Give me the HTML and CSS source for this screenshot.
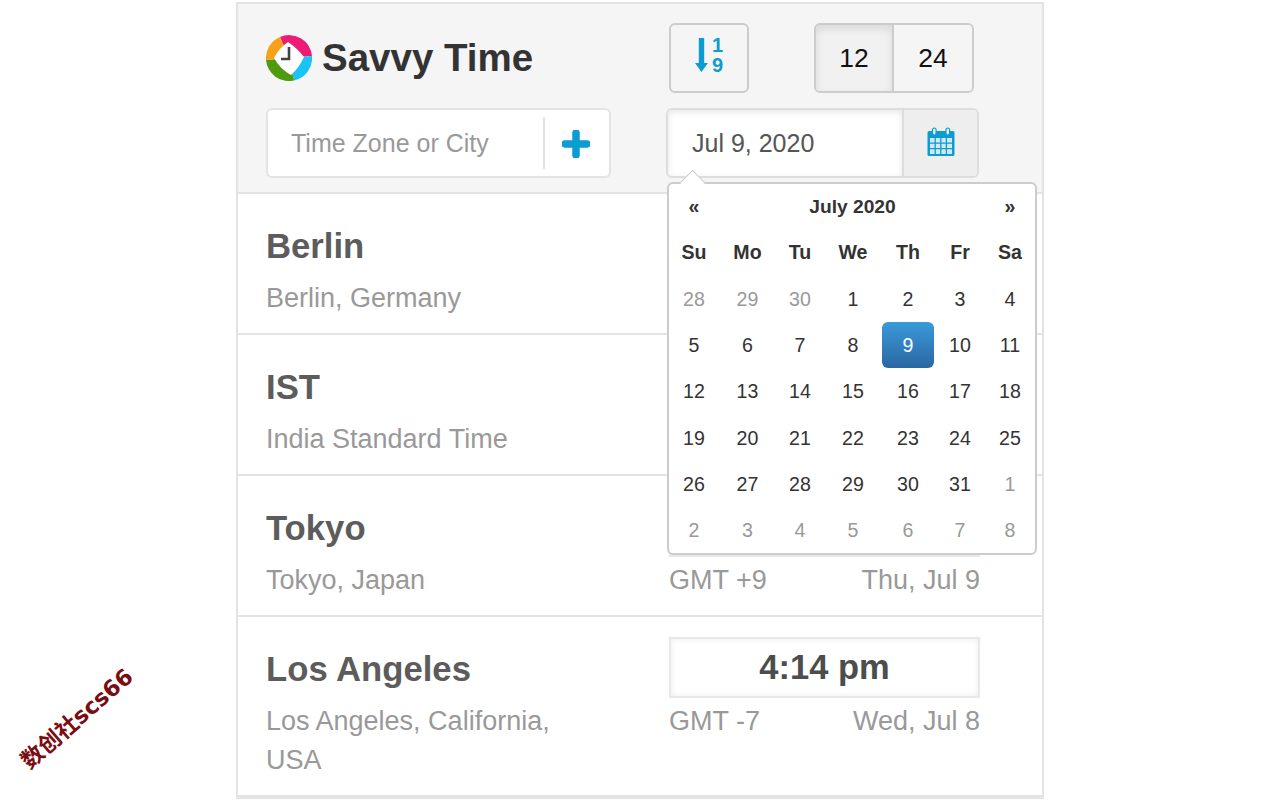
FILE: index.html
```html
<!DOCTYPE html>
<html lang="en">
<head>
    <meta charset="UTF-8">
    <meta name="viewport" content="width=device-width, initial-scale=1.0">
    <title>Savvy Time</title>
    <link rel="stylesheet" href="styles.css">
</head>
<body>

    <div class="panel">
        <!-- Header with logo, sort, clock format and pickers -->
        <div class="header">
            <div class="brand">
                <svg class="logo" viewBox="0 0 46 46" width="46" height="46">
                    <path d="M23 23L14 2A23 23 0 0 1 46 21Z" fill="#ee1b76"/>
                    <path d="M23 23L46 21A23 23 0 0 1 28 45.500Z" fill="#19c4f5"/>
                    <path d="M23 23L28 45.500A23 23 0 0 1 0 25Z" fill="#4f9a0e"/>
                    <path d="M23 23L0 25A23 23 0 0 1 14 2Z" fill="#f7a11a"/>
                    <path d="M22 7Q31 13 38 22Q33 33 25 40Q14 34 8 23Q13 13 22 7Z" fill="#fff"/>
                    <path d="M23 12v12H15" fill="none" stroke="#444" stroke-width="2.600"/>
                </svg>
                <h1>Savvy Time</h1>
            </div>
            <div class="controls">
                <button class="btn btn-sort">
                    <svg viewBox="0 0 13 34" width="13" height="34">
                        <path d="M3.800 0h5.400v25H13L6.500 34 0 25h3.800Z" fill="#0d9ccf"/>
                    </svg>
                    <span class="sort-digits"><span>1</span><span>9</span></span>
                </button>
                <div class="toggle">
                    <button class="toggle-item active">12</button>
                    <button class="toggle-item">24</button>
                </div>
            </div>
            <div class="city-input">
                <input type="text" placeholder="Time Zone or City">
                <span class="add-btn">
                    <svg viewBox="0 0 28 28" width="28" height="28">
                        <path d="M14 3v22M3 14h22" stroke="#0d9ccf" stroke-width="7.500" stroke-linecap="round" fill="none"/>
                    </svg>
                </span>
            </div>
            <div class="date-input">
                <input type="text" value="Jul 9, 2020">
                <span class="cal-btn">
                    <svg viewBox="0 0 28 30" width="28" height="30">
                        <path d="M2 4h24a1.500 1.500 0 0 1 1.500 1.500v22a1.500 1.500 0 0 1-1.500 1.500H2a1.500 1.500 0 0 1-1.500-1.500v-22A1.500 1.500 0 0 1 2 4Z" fill="#0d9ccf"/>
                        <path d="M3 11h22v16H3Z" fill="#cfeaf5"/>
                        <path d="M8.200 11v16M13.800 11v16M19.400 11v16M3 16.200h22M3 21.600h22" stroke="#0d9ccf" stroke-width="1.300"/>
                        <rect x="5.500" y="1" width="3.600" height="7" rx="1.800" fill="#eee" stroke="#0d9ccf" stroke-width="1.200"/>
                        <rect x="19" y="1" width="3.600" height="7" rx="1.800" fill="#eee" stroke="#0d9ccf" stroke-width="1.200"/>
                    </svg>
                </span>
            </div>
        </div>

        <!-- Time zone rows -->
        <div class="row">
            <div class="place">
                <div class="place-name">Berlin</div>
                <div class="place-sub">Berlin, Germany</div>
            </div>
            <div class="clock">
                <div class="time"></div>
            </div>
        </div>
        <div class="row">
            <div class="place">
                <div class="place-name">IST</div>
                <div class="place-sub">India Standard Time</div>
            </div>
            <div class="clock">
                <div class="time"></div>
            </div>
        </div>
        <div class="row">
            <div class="place">
                <div class="place-name">Tokyo</div>
                <div class="place-sub">Tokyo, Japan</div>
            </div>
            <div class="clock">
                <div class="time"></div>
                <div class="meta"><span>GMT +9</span><span>Thu, Jul 9</span></div>
            </div>
        </div>
        <div class="row">
            <div class="place">
                <div class="place-name">Los Angeles</div>
                <div class="place-sub">Los Angeles, California, USA</div>
            </div>
            <div class="clock">
                <div class="time">4:14 pm</div>
                <div class="meta"><span>GMT -7</span><span>Wed, Jul 8</span></div>
            </div>
        </div>

        <!-- Date picker popup -->
        <div class="datepicker">
            <table>
                <colgroup>
                    <col class="col-a"><col class="col-b"><col class="col-c"><col class="col-d"><col class="col-e"><col class="col-e"><col class="col-c">
                </colgroup>
                <tr>
                    <th>«</th>
                    <th colspan="5" class="month">July 2020</th>
                    <th>»</th>
                </tr>
                <tr><th>Su</th><th>Mo</th><th>Tu</th><th>We</th><th>Th</th><th>Fr</th><th>Sa</th></tr>
                <tr><td class="old">28</td><td class="old">29</td><td class="old">30</td><td>1</td><td>2</td><td>3</td><td>4</td></tr>
                <tr><td>5</td><td>6</td><td>7</td><td>8</td><td class="selected">9</td><td>10</td><td>11</td></tr>
                <tr><td>12</td><td>13</td><td>14</td><td>15</td><td>16</td><td>17</td><td>18</td></tr>
                <tr><td>19</td><td>20</td><td>21</td><td>22</td><td>23</td><td>24</td><td>25</td></tr>
                <tr><td>26</td><td>27</td><td>28</td><td>29</td><td>30</td><td>31</td><td class="old">1</td></tr>
                <tr><td class="old">2</td><td class="old">3</td><td class="old">4</td><td class="old">5</td><td class="old">6</td><td class="old">7</td><td class="old">8</td></tr>
            </table>
        </div>
    </div>

    <div class="watermark">数创社scs66</div>

</body>
</html>
```

FILE: styles.css
```css
body {
    margin: 0;
    padding: 0;
    background-color: white;
    font-family: 'Liberation Sans', Arial, sans-serif;
    color: #333;
}

/* Main column */
.panel {
    position: relative;
    box-sizing: border-box;
    width: 808px;
    margin: 2px 0 0 236px;
    border: 2px solid #e3e3e3;
}

/* Header */
.header {
    display: grid;
    grid-template-columns: 403px 1fr;
    row-gap: 15px;
    padding: 19px 28px 14px;
    background-color: #f5f5f5;
    border-bottom: 2px solid #e3e3e3;
}

.brand {
    display: flex;
    align-items: center;
    gap: 10px;
}

.logo {
    display: block;
}

.brand h1 {
    margin: 0;
    font-size: 38.500px;
    font-weight: bold;
    color: #333;
}

.controls {
    display: flex;
    gap: 65px;
}

.btn {
    box-sizing: border-box;
    width: 80px;
    height: 70px;
    padding: 0 0 7px;
    display: flex;
    align-items: center;
    justify-content: center;
    gap: 4px;
    background-color: #f5f5f5;
    border: 2px solid #ccc;
    border-radius: 6px;
}

.sort-digits {
    display: flex;
    flex-direction: column;
    font-family: inherit;
    font-size: 20px;
    font-weight: bold;
    line-height: 20px;
    color: #0d9ccf;
}

.toggle {
    display: flex;
    height: 70px;
    box-sizing: border-box;
    border: 2px solid #ccc;
    border-radius: 6px;
    overflow: hidden;
}

.toggle-item {
    width: 78px;
    padding: 0;
    border: none;
    background-color: #f5f5f5;
    font-family: inherit;
    font-size: 26.400px;
    color: #111;
}

.toggle-item.active {
    background-color: #f1f1f1;
    border-right: 2px solid #ccc;
    box-shadow: inset 0 4px 8px rgba(0, 0, 0, 0.1);
}

.city-input {
    box-sizing: border-box;
    width: 345px;
    height: 70px;
    display: flex;
    align-items: center;
    background-color: white;
    border: 2px solid #e3e3e3;
    border-radius: 6px;
}

.city-input input,
.date-input input {
    box-sizing: border-box;
    min-width: 0;
    border: none;
    outline: none;
    background: none;
    font-family: inherit;
    font-size: 25px;
}

.city-input input {
    flex: 1;
    height: 100%;
    padding: 0 0 0 23px;
    color: #999;
}

.city-input input::placeholder {
    color: #999;
    opacity: 1;
}

.add-btn {
    box-sizing: border-box;
    width: 66px;
    height: 52px;
    padding: 1px 2px 0 0;
    display: flex;
    align-items: center;
    justify-content: center;
    border-left: 2px solid #e3e3e3;
}

.date-input {
    box-sizing: border-box;
    width: 313px;
    height: 70px;
    margin-left: -3px;
    display: flex;
    border: 2px solid #ddd;
    border-radius: 6px;
    overflow: hidden;
}

.date-input input {
    width: 234px;
    padding: 0 0 0 24px;
    background-color: white;
    color: #555;
    box-shadow: inset 0 2px 6px rgba(0, 0, 0, 0.1);
}

.cal-btn {
    flex: 1;
    padding-bottom: 3px;
    display: flex;
    align-items: center;
    justify-content: center;
    background-color: #eee;
    border-left: 2px solid #ddd;
}

/* Time zone rows */
.row {
    display: flex;
    padding: 0 0 15px 28px;
    border-bottom: 2px solid #e3e3e3;
}

.place {
    box-sizing: border-box;
    width: 403px;
    padding: 25px 70px 0 0;
}

.place-name {
    font-size: 34.700px;
    font-weight: bold;
    line-height: 54px;
    color: #5c5c5c;
}

.place-sub {
    margin-top: 6px;
    font-size: 27px;
    line-height: 39px;
    color: #999;
}

.clock {
    width: 311px;
    padding-top: 20px;
}

.time {
    box-sizing: border-box;
    height: 61px;
    line-height: 57px;
    text-align: center;
    font-size: 34.500px;
    font-weight: bold;
    color: #4d4d4d;
    border: 2px solid #e8e8e8;
    box-shadow: inset 0 0 6px rgba(0, 0, 0, 0.08);
}

.meta {
    display: flex;
    justify-content: space-between;
    margin-top: 4px;
    font-size: 27px;
    line-height: 39px;
    color: #999;
}

/* Date picker popup */
.datepicker {
    position: absolute;
    top: 178px;
    left: 429px;
    box-sizing: border-box;
    width: 370px;
    height: 373px;
    background-color: white;
    border: 2px solid #ccc;
    border-radius: 6px;
    z-index: 10;
}

.datepicker::before {
    content: '';
    position: absolute;
    top: -11px;
    left: 14px;
    width: 18px;
    height: 18px;
    background-color: white;
    border-top: 1px solid #ccc;
    border-left: 1px solid #ccc;
    transform: rotate(45deg) scale(0.95);
}

.datepicker table {
    position: relative;
    width: 365px;
    margin-top: -1px;
    table-layout: fixed;
    border-collapse: collapse;
    border-spacing: 0;
    font-size: 19.600px;
}

.col-a { width: 50px; }
.col-b { width: 57px; }
.col-c { width: 48px; }
.col-d { width: 58px; }
.col-e { width: 52px; }

.datepicker tr {
    height: 46.300px;
}

.datepicker th,
.datepicker td {
    padding: 1px 0 0;
    text-align: center;
    color: #333;
}

.datepicker th.month {
    font-size: 19.200px;
}

.datepicker td.old {
    color: #999;
}

.datepicker td.selected {
    color: white;
    background-image: linear-gradient(to bottom, #3a9ad9, #2a67a3);
    border-radius: 6px;
}

/* Watermark in the corner */
.watermark {
    position: absolute;
    left: 6px;
    top: 701px;
    font-family: 'DejaVu Sans', 'Noto Sans CJK SC', sans-serif;
    font-size: 22.500px;
    font-weight: bold;
    color: #7a0c12;
    white-space: nowrap;
    transform: rotate(-41deg);
}
```
